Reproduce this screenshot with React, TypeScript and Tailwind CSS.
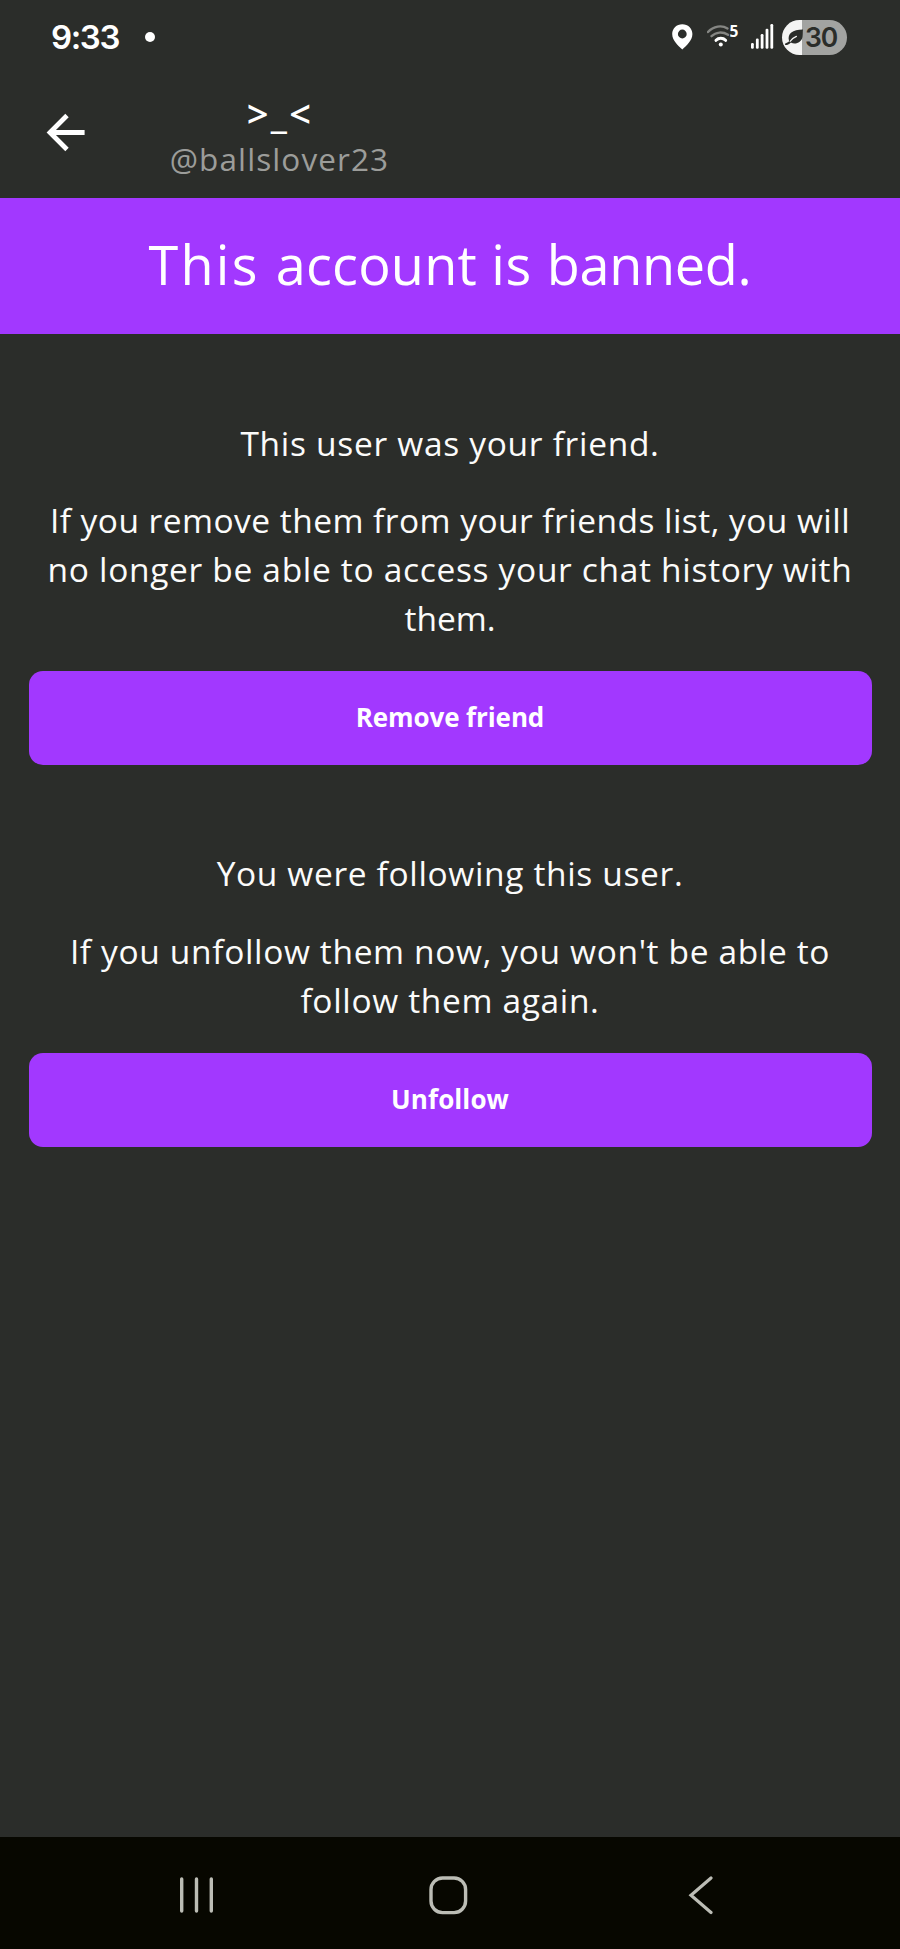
function StatusBar() {
  return (
    <div className="flex h-[74px] items-center pl-[51px] pr-[53px] font-['Inter',sans-serif]">
      <span className="w-[70px] text-[33px] font-semibold leading-none tracking-[-1.4px] text-white">9:33</span>
      <span className="ml-[23.5px] size-[10.5px] rounded-full bg-white" />
      <div className="ml-auto flex items-center">
        <svg width="21" height="26" viewBox="0 0 21 26" fill="#fff">
          <path
            fillRule="evenodd"
            d="M10.3 0.2C4.6 0.2 0.2 4.4 0.2 10C0.2 16.5 6.3 21.8 10.3 25.6C14.3 21.8 20.4 16.5 20.4 10C20.4 4.4 16 0.2 10.3 0.2ZM10.3 5.6A4.4 4.4 0 1 1 10.3 14.4A4.4 4.4 0 0 1 10.3 5.6Z"
          />
        </svg>
        <div className="ml-[14px] flex h-[26px] w-[34px] items-start">
          <svg className="w-6 shrink-0" width="24" height="26" viewBox="0 0 24 26" fill="none" strokeLinecap="round">
            <path d="M1 8C6.5 1.8 15 1 20.5 4.4" stroke="#858683" strokeWidth="2.4" />
            <path d="M4.5 12.2C9 7.8 15.5 7.4 21 10.8" stroke="#858683" strokeWidth="2.4" />
            <path d="M9 16.3C11.6 13.6 16 13.6 18.6 16.3" stroke="#fff" strokeWidth="3" />
            <circle cx="13.8" cy="20.4" r="2" fill="#fff" />
          </svg>
          <span className="-ml-[1.5px] font-['Open_Sans',sans-serif] text-[15.5px] font-bold leading-[15px] text-white">5</span>
        </div>
        <svg className="ml-[10px]" width="23" height="26" viewBox="0 0 23 26" fill="#fff">
          <rect x="0" y="19" width="2.8" height="5.8" rx="1.2" />
          <rect x="4.9" y="14.6" width="2.8" height="10.2" rx="1.2" />
          <rect x="9.7" y="10" width="2.8" height="14.8" rx="1.2" />
          <rect x="14.6" y="4.8" width="2.8" height="20" rx="1.2" />
          <rect x="19.4" y="0" width="2.8" height="24.8" rx="1.2" />
        </svg>
        <div className="ml-2 flex h-[35px] w-[65px] items-center rounded-full bg-linear-to-r from-[#f4f4f3] from-[20px] to-[#a2a3a1] to-[20px] pl-[3px]">
          <svg width="19" height="16" viewBox="0 0 19 16">
            <path d="M4 12C2.2 4.5 7.5 0.8 18 0.6C17.6 3 18 5 17.5 8C16.5 13.5 10.5 16 5.8 13.6Z" fill="#2b2d2a" />
            <path d="M1 15.2C3.2 15 4.5 13.6 6 12" stroke="#2b2d2a" strokeWidth="2" strokeLinecap="round" fill="none" />
            <path d="M5.2 12.2C6.5 9.9 8.8 8.6 11.4 7.4" stroke="#f4f4f3" strokeWidth="1.3" strokeLinecap="round" fill="none" />
          </svg>
          <span className="ml-px text-[26.5px] font-semibold leading-none tracking-[-1px] text-[#2b2d2a]">30</span>
        </div>
      </div>
    </div>
  );
}

function Header() {
  return (
    <header className="flex h-[124px] items-start pl-[46px]">
      <svg className="mt-[38px]" width="40" height="41" viewBox="0 0 40 41" fill="none" stroke="#fff" strokeWidth="4.8">
        <path d="M38.6 20.5H4M21 3.5L4 20.5L21 37.5" />
      </svg>
      <div className="ml-[73px] flex w-[240px] flex-col items-center">
        <h1 className="mt-[16px] pl-[2px] text-[38px] font-semibold leading-[46px] tracking-[2.3px] text-white">{">_<"}</h1>
        <p className="mt-[3px] pl-px text-[31.5px] leading-[40px] tracking-[1.1px] text-[#9c9d9a]">@ballslover23</p>
      </div>
    </header>
  );
}

function ActionButton({ label, className }: { label: string; className: string }) {
  return (
    <button
      className={`flex h-[94px] w-[843px] items-center justify-center rounded-[14px] bg-[#a238ff] pb-px text-[26px] font-bold text-white ${className}`}
    >
      {label}
    </button>
  );
}

function NavBar() {
  return (
    <nav className="mt-auto flex h-[112px] items-center bg-[#070700] pt-[4px] text-[#bcbdb5]">
      <svg className="ml-[178px]" width="37" height="38" viewBox="0 0 37 38" stroke="currentColor" strokeWidth="3.4" strokeLinecap="round">
        <path d="M3.7 3V35M18.5 3V35M33.3 3V35" />
      </svg>
      <svg className="ml-[213px]" width="40" height="40" viewBox="0 0 40 40" fill="none" stroke="currentColor" strokeWidth="3.4">
        <rect x="3" y="3" width="34.6" height="34.6" rx="11.5" />
      </svg>
      <svg className="ml-[219px]" width="26" height="40" viewBox="0 0 26 40" fill="none" stroke="currentColor" strokeWidth="3.2" strokeLinecap="round">
        <path d="M24 3L4 20.3L24 37.5" />
      </svg>
    </nav>
  );
}

export default function App() {
  return (
    <div className="flex h-[1949px] w-[900px] flex-col bg-[#2b2d2a] font-['Open_Sans',sans-serif] text-[#fbfbfa]">
      <StatusBar />
      <Header />
      <div className="flex h-[136px] items-center justify-center bg-[#a238ff] pb-[3px] text-[54px] text-white">
        <p>
          <span className="tracking-[2.2px]">This </span>
          <span className="tracking-[0.2px]">account </span>
          <span className="tracking-[0.7px]">is </span>
          <span className="tracking-[-0.3px]">banned.</span>
        </p>
      </div>
      <main className="flex flex-col items-center pt-[85px] text-center text-[33.5px] leading-[49px]">
        <p className="tracking-[0.7px]">This user was your friend.</p>
        <p className="mt-[28px]">
          <span className="block tracking-[0.46px]">If you remove them from your friends list, you will</span>
          <span className="block tracking-[0.68px]">no longer be able to access your chat history with</span>
          <span className="block">them.</span>
        </p>
        <ActionButton label="Remove friend" className="mt-[28px] tracking-[-0.1px]" />
        <p className="mt-[84px] tracking-[0.65px]">You were following this user.</p>
        <p className="mt-[29px]">
          <span className="block tracking-[0.64px]">If you unfollow them now, you won't be able to</span>
          <span className="block tracking-[0.65px]">follow them again.</span>
        </p>
        <ActionButton label="Unfollow" className="mt-[28px] tracking-[0.1px]" />
      </main>
      <NavBar />
    </div>
  );
}
